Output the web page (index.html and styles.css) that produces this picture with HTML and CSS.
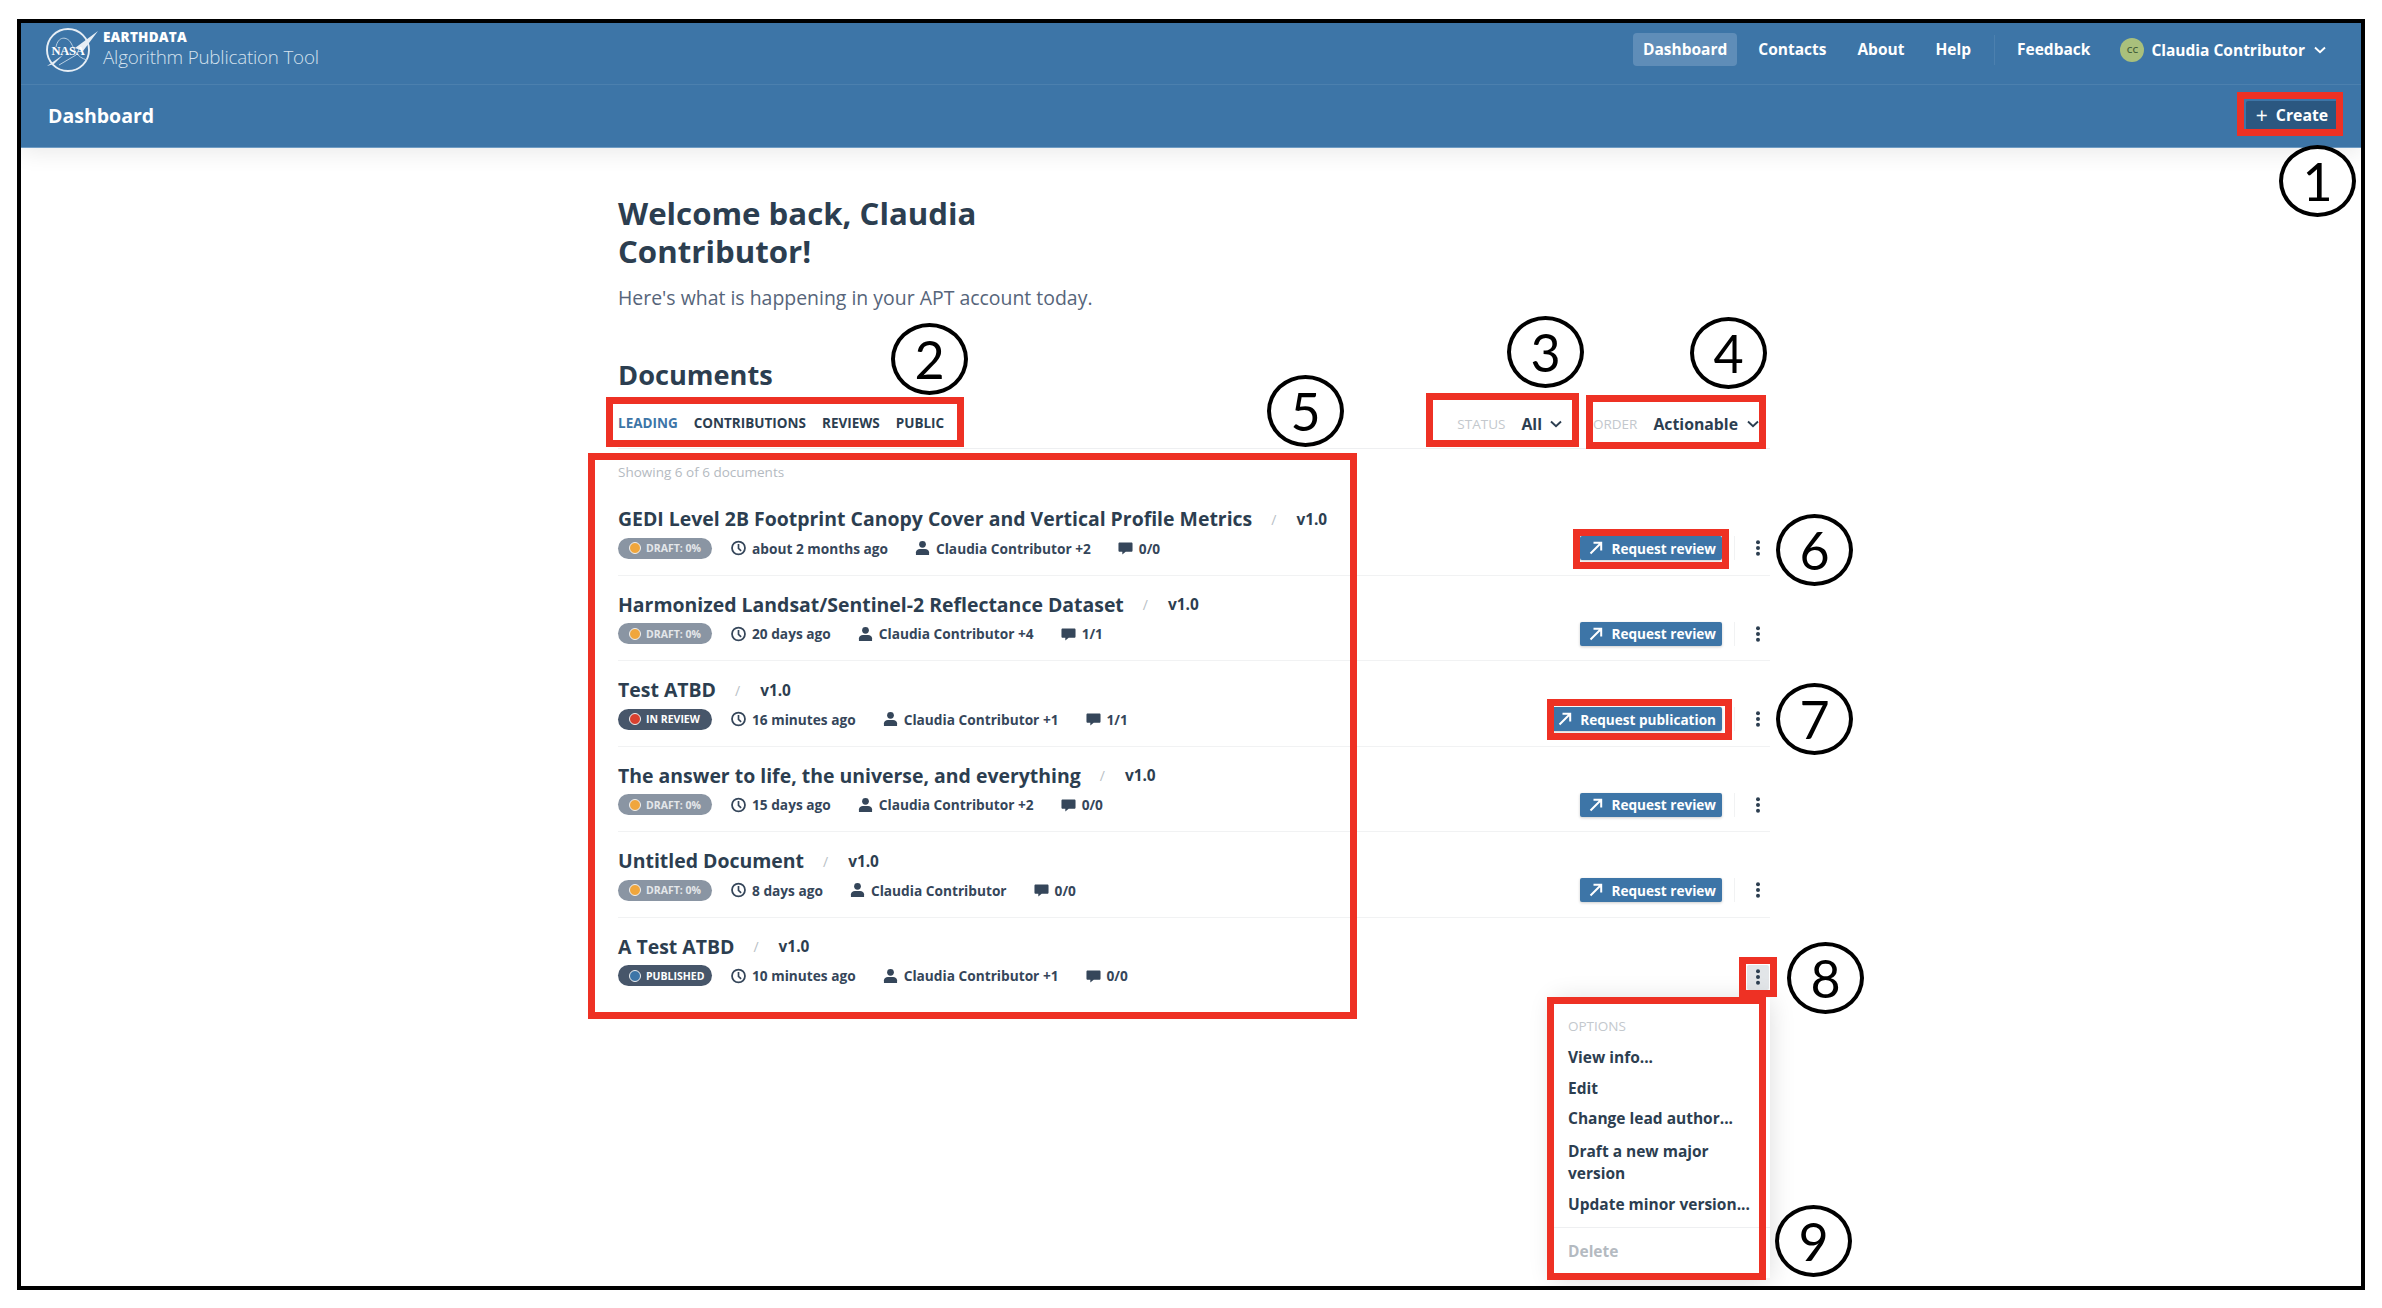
FILE: index.html
```html
<!DOCTYPE html>
<html lang="en">
<head>
<meta charset="UTF-8">
<meta name="viewport" content="width=device-width, initial-scale=1.0">
<title>Earthdata - Algorithm Publication Tool</title>
<link rel="stylesheet" href="styles.css">
</head>
<body>
<svg class="icon-defs" width="0" height="0">
  <symbol id="i-clock" viewBox="0 0 16 16"><circle cx="8" cy="8" r="6.9" fill="none" stroke="currentColor" stroke-width="1.9"/><path d="M8 3.8V8.4L10.8 11" fill="none" stroke="currentColor" stroke-width="1.8"/></symbol>
  <symbol id="i-user" viewBox="0 0 16 16"><circle cx="8" cy="4" r="3.6" fill="currentColor"/><path d="M1 15.5V12.6C1 10.4 3 9 5.2 9H10.8C13 9 15 10.4 15 12.6V15.5Z" fill="currentColor"/></symbol>
  <symbol id="i-comment" viewBox="0 0 16 16"><path d="M1.8 2H14.2C15 2 15.5 2.5 15.5 3.3V10.7C15.5 11.5 15 12 14.2 12H8.2L4.6 15V12H1.8C1 12 .5 11.5 .5 10.7V3.3C.5 2.5 1 2 1.8 2Z" fill="currentColor"/></symbol>
  <symbol id="i-arrow" viewBox="0 0 14 14"><path d="M1.5 12.5L12 2M4.5 1.8H12.2V9.5" fill="none" stroke="currentColor" stroke-width="2"/></symbol>
  <symbol id="i-chevron" viewBox="0 0 12 8"><path d="M1 1.5L6 6.3L11 1.5" fill="none" stroke="currentColor" stroke-width="1.9"/></symbol>
  <symbol id="i-dots" viewBox="0 0 6 16"><circle cx="3" cy="2.2" r="2"/><circle cx="3" cy="8" r="2"/><circle cx="3" cy="13.8" r="2"/></symbol>
</svg>

<div class="frame">
  <header class="app-header">
    <div class="top-bar">
      <a class="brand">
        <svg class="nasa-logo" viewBox="0 0 54 46">
          <circle cx="23" cy="23" r="21" fill="none" stroke="#e6eef5" stroke-width="1.9"/>
          <path d="M11 20C13 9 22 9 26 16S31 30 42 33M14 38L31 28" fill="none" stroke="#b9d0e3" stroke-width="1"/>
          <path d="M30 21L53 4L38 24Z" fill="#e6eef5"/>
          <path d="M2 39L18 28L9 37Z" fill="#e6eef5"/>
          <text x="23" y="27.5" class="nasa-word" text-anchor="middle">NASA</text>
        </svg>
        <span class="brand-text">
          <strong>EARTHDATA</strong>
          <span>Algorithm Publication Tool</span>
        </span>
      </a>
      <nav class="main-nav">
        <a class="nav-link active">Dashboard</a>
        <a class="nav-link">Contacts</a>
        <a class="nav-link">About</a>
        <a class="nav-link">Help</a>
        <span class="nav-sep"></span>
        <a class="nav-link">Feedback</a>
        <a class="nav-user"><span class="avatar">CC</span>Claudia Contributor<svg class="chevron"><use href="#i-chevron"/></svg></a>
      </nav>
    </div>
    <div class="sub-bar">
      <h2 class="page-title">Dashboard</h2>
      <button class="create-btn"><span class="plus">+</span>Create</button>
    </div>
  </header>

  <main class="content">
    <h1 class="welcome">Welcome back, Claudia Contributor!</h1>
    <p class="lead">Here's what is happening in your APT account today.</p>
    <h2 class="section-title">Documents</h2>
    <div class="toolbar">
      <div class="tabs">
        <a class="tab active">Leading</a>
        <a class="tab">Contributions</a>
        <a class="tab">Reviews</a>
        <a class="tab">Public</a>
      </div>
      <div class="filters">
        <div class="filter status-filter"><span class="filter-label">Status</span><span class="filter-value">All</span><svg class="chevron"><use href="#i-chevron"/></svg></div>
        <div class="filter"><span class="filter-label">Order</span><span class="filter-value">Actionable</span><svg class="chevron"><use href="#i-chevron"/></svg></div>
      </div>
    </div>
    <p class="showing">Showing 6 of 6 documents</p>

    <ul class="doc-list">
      <li class="doc-row">
        <div class="doc-info">
          <div class="doc-head"><h3 class="doc-title">GEDI Level 2B Footprint Canopy Cover and Vertical Profile Metrics</h3><span class="slash">/</span><span class="version">v1.0</span></div>
          <div class="doc-meta">
            <span class="badge draft"><i class="dot"></i>DRAFT: 0%</span>
            <span class="meta-item"><svg class="meta-icon"><use href="#i-clock"/></svg>about 2 months ago</span>
            <span class="meta-item"><svg class="meta-icon"><use href="#i-user"/></svg>Claudia Contributor +2</span>
            <span class="meta-item"><svg class="meta-icon"><use href="#i-comment"/></svg>0/0</span>
          </div>
        </div>
        <div class="doc-actions">
          <button class="action-btn"><svg class="arrow"><use href="#i-arrow"/></svg>Request review</button>
          <span class="action-sep"></span>
          <button class="kebab"><svg class="dots"><use href="#i-dots"/></svg></button>
        </div>
      </li>
      <li class="doc-row">
        <div class="doc-info">
          <div class="doc-head"><h3 class="doc-title">Harmonized Landsat/Sentinel-2 Reflectance Dataset</h3><span class="slash">/</span><span class="version">v1.0</span></div>
          <div class="doc-meta">
            <span class="badge draft"><i class="dot"></i>DRAFT: 0%</span>
            <span class="meta-item"><svg class="meta-icon"><use href="#i-clock"/></svg>20 days ago</span>
            <span class="meta-item"><svg class="meta-icon"><use href="#i-user"/></svg>Claudia Contributor +4</span>
            <span class="meta-item"><svg class="meta-icon"><use href="#i-comment"/></svg>1/1</span>
          </div>
        </div>
        <div class="doc-actions">
          <button class="action-btn"><svg class="arrow"><use href="#i-arrow"/></svg>Request review</button>
          <span class="action-sep"></span>
          <button class="kebab"><svg class="dots"><use href="#i-dots"/></svg></button>
        </div>
      </li>
      <li class="doc-row">
        <div class="doc-info">
          <div class="doc-head"><h3 class="doc-title">Test ATBD</h3><span class="slash">/</span><span class="version">v1.0</span></div>
          <div class="doc-meta">
            <span class="badge review"><i class="dot"></i>IN REVIEW</span>
            <span class="meta-item"><svg class="meta-icon"><use href="#i-clock"/></svg>16 minutes ago</span>
            <span class="meta-item"><svg class="meta-icon"><use href="#i-user"/></svg>Claudia Contributor +1</span>
            <span class="meta-item"><svg class="meta-icon"><use href="#i-comment"/></svg>1/1</span>
          </div>
        </div>
        <div class="doc-actions">
          <button class="action-btn"><svg class="arrow"><use href="#i-arrow"/></svg>Request publication</button>
          <span class="action-sep"></span>
          <button class="kebab"><svg class="dots"><use href="#i-dots"/></svg></button>
        </div>
      </li>
      <li class="doc-row">
        <div class="doc-info">
          <div class="doc-head"><h3 class="doc-title">The answer to life, the universe, and everything</h3><span class="slash">/</span><span class="version">v1.0</span></div>
          <div class="doc-meta">
            <span class="badge draft"><i class="dot"></i>DRAFT: 0%</span>
            <span class="meta-item"><svg class="meta-icon"><use href="#i-clock"/></svg>15 days ago</span>
            <span class="meta-item"><svg class="meta-icon"><use href="#i-user"/></svg>Claudia Contributor +2</span>
            <span class="meta-item"><svg class="meta-icon"><use href="#i-comment"/></svg>0/0</span>
          </div>
        </div>
        <div class="doc-actions">
          <button class="action-btn"><svg class="arrow"><use href="#i-arrow"/></svg>Request review</button>
          <span class="action-sep"></span>
          <button class="kebab"><svg class="dots"><use href="#i-dots"/></svg></button>
        </div>
      </li>
      <li class="doc-row">
        <div class="doc-info">
          <div class="doc-head"><h3 class="doc-title">Untitled Document</h3><span class="slash">/</span><span class="version">v1.0</span></div>
          <div class="doc-meta">
            <span class="badge draft"><i class="dot"></i>DRAFT: 0%</span>
            <span class="meta-item"><svg class="meta-icon"><use href="#i-clock"/></svg>8 days ago</span>
            <span class="meta-item"><svg class="meta-icon"><use href="#i-user"/></svg>Claudia Contributor</span>
            <span class="meta-item"><svg class="meta-icon"><use href="#i-comment"/></svg>0/0</span>
          </div>
        </div>
        <div class="doc-actions">
          <button class="action-btn"><svg class="arrow"><use href="#i-arrow"/></svg>Request review</button>
          <span class="action-sep"></span>
          <button class="kebab"><svg class="dots"><use href="#i-dots"/></svg></button>
        </div>
      </li>
      <li class="doc-row last">
        <div class="doc-info">
          <div class="doc-head"><h3 class="doc-title">A Test ATBD</h3><span class="slash">/</span><span class="version">v1.0</span></div>
          <div class="doc-meta">
            <span class="badge published"><i class="dot"></i>PUBLISHED</span>
            <span class="meta-item"><svg class="meta-icon"><use href="#i-clock"/></svg>10 minutes ago</span>
            <span class="meta-item"><svg class="meta-icon"><use href="#i-user"/></svg>Claudia Contributor +1</span>
            <span class="meta-item"><svg class="meta-icon"><use href="#i-comment"/></svg>0/0</span>
          </div>
        </div>
        <div class="doc-actions">
          <div class="kebab-wrap">
            <button class="kebab open"><svg class="dots"><use href="#i-dots"/></svg></button>
            <div class="menu">
              <div class="menu-label">OPTIONS</div>
              <a class="menu-item">View info...</a>
              <a class="menu-item">Edit</a>
              <a class="menu-item">Change lead author...</a>
              <a class="menu-item draft-item">Draft a new major version</a>
              <a class="menu-item">Update minor version...</a>
              <div class="menu-divider"></div>
              <a class="menu-item disabled">Delete</a>
            </div>
          </div>
        </div>
      </li>
    </ul>
  </main>
</div>

<!-- red boxes and numbered callouts drawn on top of the screenshot -->
<div class="box box-create"></div>
<div class="box box-tabs"></div>
<div class="box box-status"></div>
<div class="box box-order"></div>
<div class="box box-list"></div>
<div class="box box-review"></div>
<div class="box box-publish"></div>
<div class="box box-kebab"></div>
<div class="box box-menu"></div>
<div class="callout c1">1</div>
<div class="callout c2">2</div>
<div class="callout c3">3</div>
<div class="callout c4">4</div>
<div class="callout c5">5</div>
<div class="callout c6">6</div>
<div class="callout c7">7</div>
<div class="callout c8">8</div>
<div class="callout c9">9</div>
</body>
</html>
```

FILE: styles.css
```css
* { box-sizing: border-box; }
html, body { margin: 0; padding: 0; }
body { position: relative; height: 1308px; overflow: hidden; background: #fff; font-family: "Open Sans", Arial, sans-serif; color: #2c3e50; }
h1, h2, h3, p, ul { margin: 0; padding: 0; }
button { font-family: inherit; border: none; cursor: pointer; }
.icon-defs { position: absolute; }

.frame { margin: 19px 0 0 17px; width: 2348px; height: 1271px; border: 4px solid #000; background: #fff; overflow: hidden; }

/* header */
.app-header { background: #3d75a7; color: #fff; box-shadow: 0 4px 22px rgba(0, 0, 0, 0.09); border-bottom: 1px solid #6f9cc4; }
.top-bar { display: flex; justify-content: space-between; align-items: center; height: 62px; padding: 0 35px 8px 24px; border-bottom: 1px solid #4c80ae; }
.brand { display: flex; align-items: center; gap: 4px; }
.nasa-logo { width: 54px; height: 46px; }
.nasa-word { font-family: "Liberation Serif", serif; font-size: 12.5px; font-weight: bold; fill: #fff; letter-spacing: -0.3px; }
.brand-text { display: flex; flex-direction: column; color: #d5e2ee; font-size: 18.8px; line-height: 26px; letter-spacing: -0.2px; font-weight: 300; }
.brand-text strong { color: #fff; font-size: 13.5px; line-height: 14px; font-weight: 800; letter-spacing: 0.2px; }
.main-nav { display: flex; align-items: center; font-size: 15.5px; font-weight: 700; }
.nav-link { padding: 0 10px; line-height: 33px; border-radius: 4px; margin-right: 11px; }
.nav-link.active { background: #5f8db8; }
.nav-sep { width: 1px; height: 30px; background: #4c80ae; margin: 0 12px 0 2px; }
.nav-user { display: flex; align-items: center; gap: 7px; margin-left: 9px; }
.avatar { display: flex; align-items: center; justify-content: center; width: 24px; height: 24px; border-radius: 50%; background: #a9c07c; color: #44603a; font-size: 9px; font-weight: 600; }
.chevron { width: 12px; height: 8px; margin-left: 2px; }
.main-nav .chevron { margin-left: 2px; color: #fff; }

.sub-bar { display: flex; justify-content: space-between; align-items: center; height: 62px; padding: 0 23px 2px 27px; }
.page-title { font-size: 19.5px; font-weight: 700; }
.create-btn { display: flex; align-items: center; justify-content: center; gap: 8px; background: #2b5780; color: #fff; font-size: 15.8px; font-weight: 700; height: 29px; width: 92px; padding: 0; border-radius: 2px; }
.plus { font-size: 21px; line-height: 20px; font-weight: 400; }

/* page body */
.content { width: 1749px; padding: 46px 0 0 597px; }
.welcome { max-width: 420px; font-size: 31.2px; line-height: 38px; font-weight: 700; }
.lead { margin-top: 15px; font-size: 19.45px; line-height: 26px; color: #56657a; }
.section-title { margin-top: 48px; font-size: 27.2px; line-height: 32px; font-weight: 700; }

.toolbar { display: flex; justify-content: space-between; align-items: center; height: 58px; padding: 7px 11px 0 0; border-bottom: 1px solid #eeeff1; }
.tabs { display: flex; gap: 16px; }
.tab { font-size: 13.5px; font-weight: 700; text-transform: uppercase; }
.tab.active { color: #3d75a7; }
.filters { display: flex; align-items: center; gap: 31px; padding-top: 2px; }
.filter { display: flex; align-items: center; }
.filter-label { color: #c3c8cd; font-size: 13.5px; text-transform: uppercase; margin-right: 16px; }
.filter-value { font-size: 15.8px; font-weight: 700; margin-right: 7px; }
.status-filter .filter-value { margin-right: 6px; }
.filter .chevron { color: #2c3e50; }

.showing { margin-top: 14px; font-size: 13.5px; line-height: 18px; color: #b4bac1; }
.doc-list { list-style: none; margin-top: 9px; }
.doc-row { display: flex; justify-content: space-between; height: 85.6px; padding: 16px 1px 16px 0; border-bottom: 1px solid #f1f2f3; }
.doc-row.last { border-bottom: none; }
.doc-head { display: flex; align-items: center; height: 26px; }
.doc-title { font-size: 19.45px; line-height: 26px; font-weight: 700; }
.slash { margin: 0 20px 0 19px; color: #b9bfc6; font-size: 14px; }
.version { font-size: 15.4px; font-weight: 700; }
.doc-meta { display: flex; align-items: center; gap: 27px; margin-top: 5.5px; height: 21px; font-size: 13.7px; font-weight: 700; color: #35465a; }
.meta-item { display: flex; align-items: center; gap: 6px; white-space: nowrap; }
.meta-icon { width: 15px; height: 16px; color: #35465a; }

.badge { display: flex; align-items: center; width: 94px; height: 21px; margin-right: -8px; padding-left: 11px; border-radius: 11px; font-size: 10.5px; font-weight: 700; color: #fff; white-space: nowrap; }
.badge .dot { width: 12px; height: 12px; margin-right: 5px; border-radius: 50%; border: 1.5px solid #eef0f2; flex: none; }
.badge.draft { background: #8a95a3; color: #e4e7ea; }
.badge.draft .dot { background: #f0a63c; }
.badge.review { background: #47566a; }
.badge.review .dot { background: #d9402f; }
.badge.published { background: #47566a; }
.badge.published .dot { background: #3d75a7; }

.doc-actions { display: flex; align-items: center; align-self: flex-end; height: 21px; gap: 12px; }
.action-btn { display: flex; align-items: center; gap: 8px; height: 24px; padding: 0 6px 0 9px; background: #3d75a7; color: #fff; font-size: 13.6px; font-weight: 700; border-radius: 2px; box-shadow: 0 1px 3px rgba(0, 0, 0, 0.2); white-space: nowrap; }
.arrow { width: 14px; height: 14px; }
.action-sep { width: 1px; height: 24px; background: #f1f2f3; }
.kebab { display: flex; align-items: center; justify-content: center; width: 22px; height: 25px; padding: 0; background: none; border-radius: 2px; }
.kebab.open { background: #e2e5e8; }
.dots { width: 6px; height: 16px; fill: #2c3e50; }

/* options menu */
.kebab-wrap { position: relative; }
.menu { position: absolute; top: 33px; right: -1px; width: 216px; padding: 19px 12px 0 14px; height: 280px; background: #fff; box-shadow: 0 2px 24px rgba(0, 0, 0, 0.14); font-size: 15.5px; font-weight: 700; }
.menu-label { margin-bottom: 7.5px; color: #c3c8cd; font-size: 13.5px; line-height: 18px; font-weight: 400; }
.menu-item { display: block; padding: 4px 0; line-height: 22.5px; }
.draft-item { margin-top: 2px; }
.menu-divider { margin: 8px -12px 12px -14px; border-top: 1px solid #eeeff1; }
.menu-item.disabled { padding: 0; color: #b4bac1; }

/* annotations */
.box { position: absolute; border: 7px solid #ee3124; }
.box-create { left: 2237px; top: 92px; width: 106px; height: 44px; }
.box-tabs { left: 606px; top: 397px; width: 358px; height: 50px; }
.box-status { left: 1426px; top: 393px; width: 153px; height: 54px; }
.box-order { left: 1586px; top: 395px; width: 180px; height: 54px; }
.box-list { left: 588px; top: 453px; width: 769px; height: 566px; }
.box-review { left: 1573px; top: 529px; width: 156px; height: 40px; }
.box-publish { left: 1547px; top: 699px; width: 185px; height: 41px; }
.box-kebab { left: 1739px; top: 957px; width: 38px; height: 40px; }
.box-menu { left: 1547px; top: 997px; width: 219px; height: 283px; }

.callout { position: absolute; display: flex; align-items: center; justify-content: center; width: 77px; height: 72px; border: 4px solid #000; border-radius: 50%; background: #fff; color: #000; font-family: Lato, sans-serif; font-size: 52px; }
.c1 { left: 2279px; top: 145px; }
.c2 { left: 891px; top: 323px; }
.c3 { left: 1507px; top: 316px; }
.c4 { left: 1690px; top: 317px; }
.c5 { left: 1267px; top: 375px; }
.c6 { left: 1776px; top: 514px; }
.c7 { left: 1776px; top: 683px; }
.c8 { left: 1787px; top: 942px; }
.c9 { left: 1775px; top: 1205px; }
```
